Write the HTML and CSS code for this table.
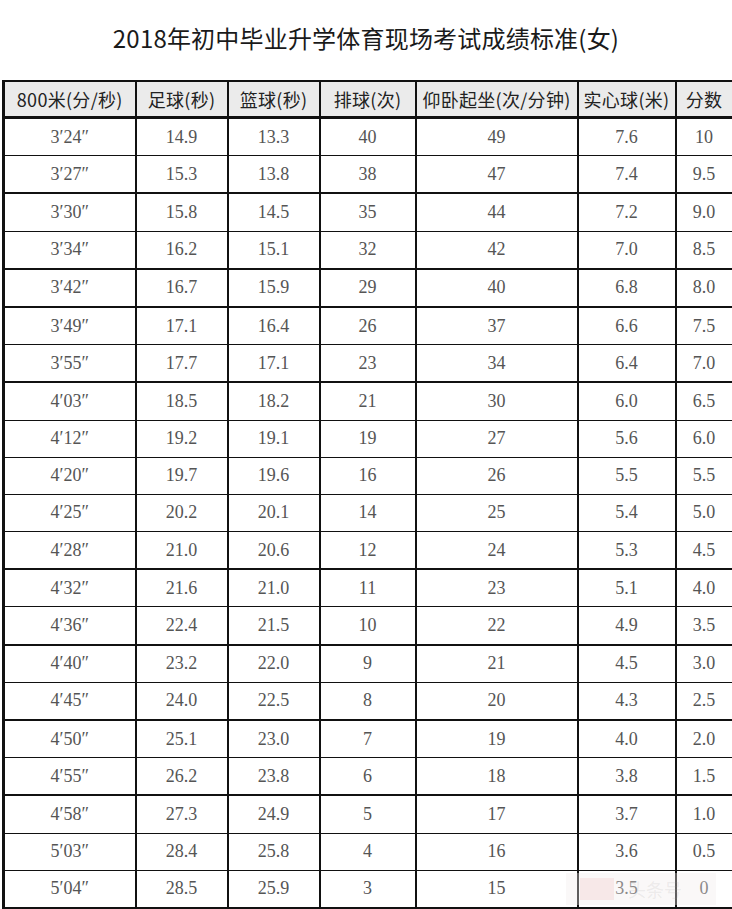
FILE: index.html
```html
<!DOCTYPE html>
<html lang="zh">
<head>
<meta charset="utf-8">
<title>2018年初中毕业升学体育现场考试成绩标准(女)</title>
<link rel="stylesheet" href="styles.css">
</head>
<body>
<div class="page">
  <h1 class="title">2018年初中毕业升学体育现场考试成绩标准(女)</h1>
  <table class="score">
    <colgroup>
      <col class="c1"><col class="c2"><col class="c3"><col class="c4"><col class="c5"><col class="c6"><col class="c7">
    </colgroup>
    <thead>
      <tr class="head thick">
        <th>800米(分/秒)</th><th>足球(秒)</th><th>篮球(秒)</th><th>排球(次)</th><th>仰卧起坐(次/分钟)</th><th>实心球(米)</th><th>分数</th>
      </tr>
    </thead>
    <tbody>
      <tr><td>3′24″</td><td>14.9</td><td>13.3</td><td>40</td><td>49</td><td>7.6</td><td>10</td></tr>
      <tr class="thick"><td>3′27″</td><td>15.3</td><td>13.8</td><td>38</td><td>47</td><td>7.4</td><td>9.5</td></tr>
      <tr><td>3′30″</td><td>15.8</td><td>14.5</td><td>35</td><td>44</td><td>7.2</td><td>9.0</td></tr>
      <tr class="thick"><td>3′34″</td><td>16.2</td><td>15.1</td><td>32</td><td>42</td><td>7.0</td><td>8.5</td></tr>
      <tr class="thick"><td>3′42″</td><td>16.7</td><td>15.9</td><td>29</td><td>40</td><td>6.8</td><td>8.0</td></tr>
      <tr><td>3′49″</td><td>17.1</td><td>16.4</td><td>26</td><td>37</td><td>6.6</td><td>7.5</td></tr>
      <tr class="thick"><td>3′55″</td><td>17.7</td><td>17.1</td><td>23</td><td>34</td><td>6.4</td><td>7.0</td></tr>
      <tr><td>4′03″</td><td>18.5</td><td>18.2</td><td>21</td><td>30</td><td>6.0</td><td>6.5</td></tr>
      <tr><td>4′12″</td><td>19.2</td><td>19.1</td><td>19</td><td>27</td><td>5.6</td><td>6.0</td></tr>
      <tr><td>4′20″</td><td>19.7</td><td>19.6</td><td>16</td><td>26</td><td>5.5</td><td>5.5</td></tr>
      <tr><td>4′25″</td><td>20.2</td><td>20.1</td><td>14</td><td>25</td><td>5.4</td><td>5.0</td></tr>
      <tr class="thick"><td>4′28″</td><td>21.0</td><td>20.6</td><td>12</td><td>24</td><td>5.3</td><td>4.5</td></tr>
      <tr><td>4′32″</td><td>21.6</td><td>21.0</td><td>11</td><td>23</td><td>5.1</td><td>4.0</td></tr>
      <tr class="thick"><td>4′36″</td><td>22.4</td><td>21.5</td><td>10</td><td>22</td><td>4.9</td><td>3.5</td></tr>
      <tr><td>4′40″</td><td>23.2</td><td>22.0</td><td>9</td><td>21</td><td>4.5</td><td>3.0</td></tr>
      <tr class="thick"><td>4′45″</td><td>24.0</td><td>22.5</td><td>8</td><td>20</td><td>4.3</td><td>2.5</td></tr>
      <tr><td>4′50″</td><td>25.1</td><td>23.0</td><td>7</td><td>19</td><td>4.0</td><td>2.0</td></tr>
      <tr class="thick"><td>4′55″</td><td>26.2</td><td>23.8</td><td>6</td><td>18</td><td>3.8</td><td>1.5</td></tr>
      <tr><td>4′58″</td><td>27.3</td><td>24.9</td><td>5</td><td>17</td><td>3.7</td><td>1.0</td></tr>
      <tr><td>5′03″</td><td>28.4</td><td>25.8</td><td>4</td><td>16</td><td>3.6</td><td>0.5</td></tr>
      <tr class="last"><td>5′04″</td><td>28.5</td><td>25.9</td><td>3</td><td>15</td><td>3.5</td><td>0</td></tr>
    </tbody>
  </table>
  <div class="watermark"><span class="wm-logo"></span><span class="wm-text">头条号</span></div>
</div>
</body>
</html>
```
FILE: styles.css
```css
html, body {
  margin: 0;
  padding: 0;
  background: #ffffff;
}
.page {
  position: relative;
  width: 732px;
  height: 909px;
  overflow: hidden;
}
.title {
  margin: 0;
  height: 80px;
  padding-top: 22px;
  box-sizing: border-box;
  text-align: center;
  font-family: "Noto Sans CJK SC", "Noto Sans", sans-serif;
  font-weight: 400;
  font-size: 24px;
  line-height: 32px;
  color: #1a1a1a;
  letter-spacing: 0.2px;
}
.score {
  margin-left: 2px;
  border-collapse: collapse;
  table-layout: fixed;
  width: 729px;
  border-top: 2px solid #111;
  border-left: 3px solid #111;
  border-right: 2px solid #111;
  border-bottom: 3px solid #111;
}
.c1 { width: 132px; }
.c2 { width: 92px; }
.c3 { width: 92px; }
.c4 { width: 96px; }
.c5 { width: 162px; }
.c6 { width: 98px; }
.c7 { width: 57px; }
.score th,
.score td {
  padding: 0;
  text-align: center;
  border-left: 2px solid #111;
  border-right: 2px solid #111;
  border-bottom: 1px solid #111;
}
.score tr.thick th,
.score tr.thick td {
  border-bottom: 2px solid #111;
}
.score tr.head th {
  height: 34px;
  background: #ebebeb;
  font-family: "Noto Sans CJK SC", "Noto Sans", sans-serif;
  font-weight: 400;
  font-size: 18px;
  color: #222;
  letter-spacing: 0.3px;
  border-bottom: 3px solid #111;
}
.score td {
  height: 36.2px;
  font-family: "Liberation Serif", "DejaVu Serif", serif;
  font-size: 18px;
  color: #555;
}
.watermark {
  position: absolute;
  left: 566px;
  top: 873px;
  width: 150px;
  height: 32px;
  display: flex;
  align-items: center;
  gap: 14px;
  padding-left: 14px;
  box-sizing: border-box;
  background: rgba(240, 236, 236, 0.35);
  pointer-events: none;
}
.wm-logo {
  width: 34px;
  height: 22px;
  background: rgba(235, 150, 150, 0.16);
}
.wm-text {
  font-family: "Noto Sans CJK SC", sans-serif;
  font-size: 18px;
  color: rgba(150, 150, 150, 0.14);
}
```
